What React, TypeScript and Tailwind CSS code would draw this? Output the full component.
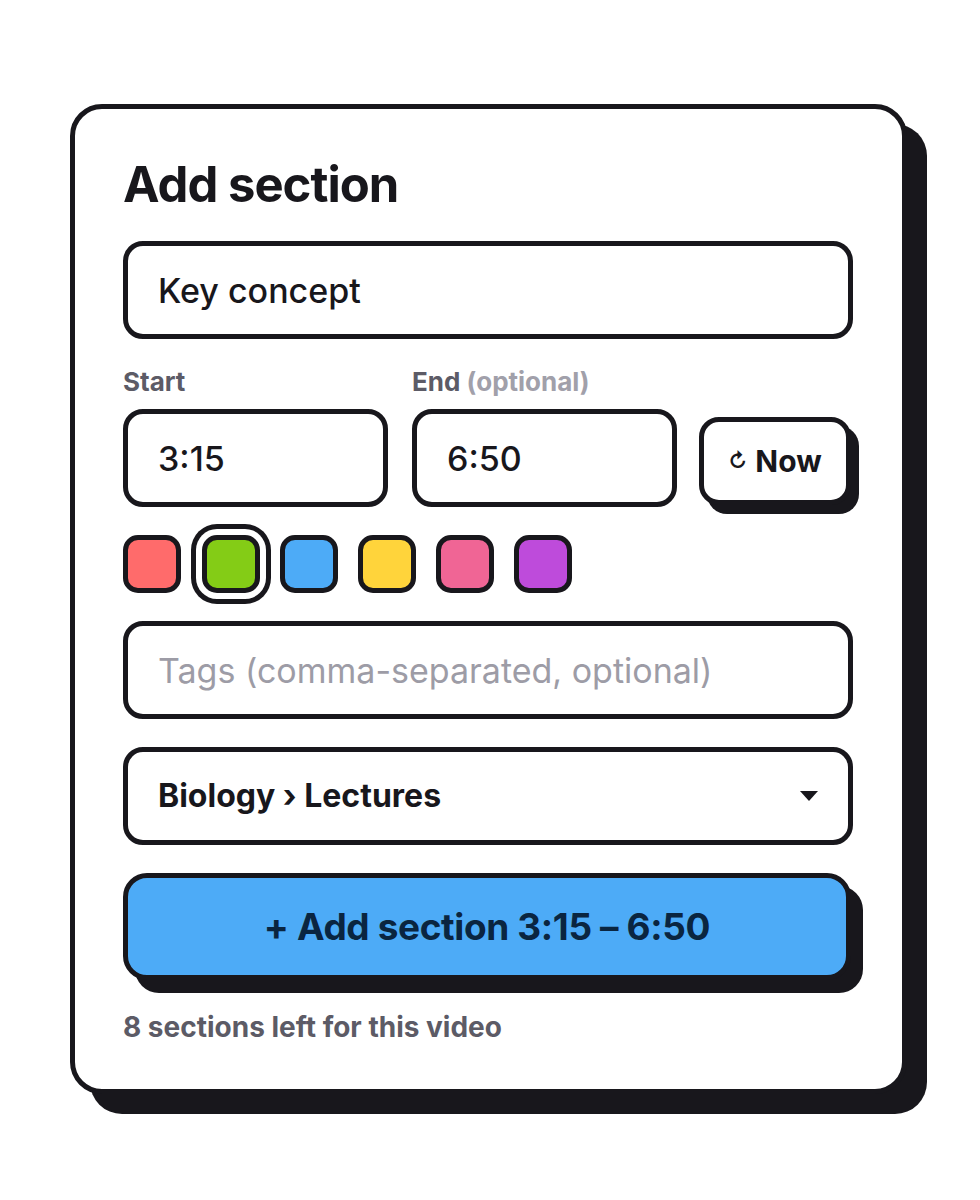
import { useState } from 'react';

const swatches = ['#ff6b6b', '#84cc16', '#4dabf7', '#ffd43b', '#f06595', '#be4bdb'];

// shared box for inputs and the folder picker; text size is set per field
const box =
  'w-full h-[98px] rounded-[20px] border-[5px] border-[#18171c] bg-white px-[30px] text-[#18171c] outline-none';

export default function App() {
  const [picked, setPicked] = useState(1);

  return (
    <div className="min-h-[1200px] bg-white font-['Inter',sans-serif] text-[#18171c]">
      <div className="pt-[104px] pl-[70px]">
        <div className="w-[837px] rounded-[32px] border-[5px] border-[#18171c] bg-white pl-[48px] pr-[49px] pt-[48px] pb-[45px] shadow-[20px_20px_0_0_#18171c]">
          <h2 className="text-[49px] font-bold leading-[56px] tracking-[-0.02em]">Add section</h2>

          <div className="mt-[28px] flex flex-col gap-[28px]">
            <input className={box + ' text-[34px] font-medium'} defaultValue="Key concept" />

            <div className="flex items-end gap-[24px]">
              <label className="flex w-[265px] flex-col gap-[12px]">
                <span className="text-[26px] font-bold leading-[30px] text-[#5c5b66]">Start</span>
                <input className={box + ' text-[34px] font-medium'} defaultValue="3:15" />
              </label>
              <label className="flex w-[265px] flex-col gap-[12px]">
                <span className="text-[26px] font-bold leading-[30px] text-[#5c5b66]">
                  End <span className="text-[#a1a0aa]">(optional)</span>
                </span>
                <input className={box + ' text-[34px] font-medium'} defaultValue="6:50" />
              </label>
              <button className="mb-[2px] ml-[-2px] flex h-[88px] w-[152px] items-center justify-center gap-[8px] rounded-[20px] border-[5px] border-[#18171c] bg-white text-[30px] font-bold shadow-[8px_9px_0_0_#18171c]">
                <span className="text-[20px]">↻</span>
                Now
              </button>
            </div>

            <div className="flex items-center gap-[20px]">
              {swatches.map((c, i) => (
                <button
                  key={c}
                  onClick={() => setPicked(i)}
                  style={{ backgroundColor: c }}
                  className={
                    'h-[58px] w-[58px] rounded-[15px] border-[5px] border-[#18171c] ' +
                    (i === picked ? 'ml-[1px] ring-[5px] ring-[#18171c] ring-offset-[6px] ring-offset-white' : '')
                  }
                />
              ))}
            </div>

            <input
              className={box + ' text-[34px] placeholder:text-[#9d9ca6]'}
              placeholder="Tags (comma-separated, optional)"
            />

            <div className={box + ' flex items-center justify-between text-[32px] font-bold'}>
              <span>Biology › Lectures</span>
              <svg width="18" height="10" viewBox="0 0 18 10">
                <path d="M0 0h18L9 10z" fill="#18171c" />
              </svg>
            </div>

            <button className="h-[107px] w-[728px] rounded-[24px] border-[5px] border-[#18171c] bg-[#4dabf7] text-[37px] font-bold tracking-[-0.01em] text-[#0a2540] shadow-[12px_13px_0_0_#18171c]">
              + Add section 3:15 – 6:50
            </button>
          </div>

          <p className="mt-[30px] text-[28px] font-bold leading-[34px] text-[#5c5b66]">8 sections left for this video</p>
        </div>
      </div>
    </div>
  );
}
